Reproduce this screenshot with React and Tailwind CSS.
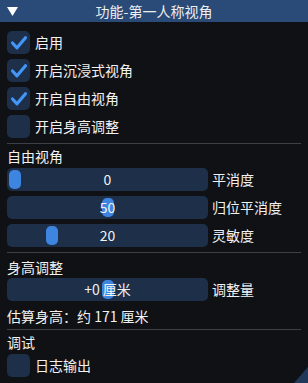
import React from "react";

const FONT = { fontFamily: '"Noto Sans CJK SC", "Noto Sans", sans-serif' };

function Checkbox({ checked, label, className = "" }) {
  return (
    <div className={"flex items-center h-[23px] " + className}>
      <div className="w-[23px] h-[23px] rounded-[5px] bg-[#1d2f49] flex items-center justify-center shrink-0">
        {checked && (
          <svg width="23" height="23" viewBox="0 0 23 23">
            <path d="M5.5 12 L10 16.8 L18.5 6.8" fill="none" stroke="#4296fa" strokeWidth="3.2" strokeLinecap="round" strokeLinejoin="round" />
          </svg>
        )}
      </div>
      <span className="ml-[5px] text-[14px] leading-[23px] text-[#f2f2f2]">{label}</span>
    </div>
  );
}

function Slider({ t, text, label, className = "" }) {
  const left = 2 + 185 * t;
  return (
    <div className={"flex items-center " + className}>
      <div className="relative w-[201px] h-[23px] rounded-[5px] bg-[#1d2f49] shrink-0">
        <div className="absolute top-[2px] h-[19px] w-[12px] rounded-[5px] bg-[#3d85e0]" style={{ left }} />
        <div className="absolute inset-0 flex items-center justify-center text-[14px] text-[#f2f2f2]">{text}</div>
      </div>
      <span className="ml-[4px] text-[14px] leading-[23px] text-[#f2f2f2]">{label}</span>
    </div>
  );
}

function Sep({ className = "" }) {
  return <div className={"h-px bg-[#3e3e47] " + className} />;
}

export default function App() {
  return (
    <div className="relative w-[308px] h-[383px] overflow-hidden bg-[#101115] text-[#f2f2f2]" style={FONT}>
      <div className="h-[22px] bg-[#2a4a78] grid grid-cols-[1fr_auto_1fr] items-center">
        <div className="pl-[7px] flex items-center">
          <svg width="11" height="10" viewBox="0 0 11 10">
            <path d="M0 1 L11 1 L5.5 10 Z" fill="#ffffff" />
          </svg>
        </div>
        <div className="text-[14px] leading-[22px] text-[#eeeeee]">功能-第一人称视角</div>
        <div />
      </div>
      <div className="px-[7px] pt-[9px] flex flex-col">
        <Checkbox checked label="启用" />
        <Checkbox checked label="开启沉浸式视角" className="mt-[5px]" />
        <Checkbox checked label="开启自由视角" className="mt-[5px]" />
        <Checkbox label="开启身高调整" className="mt-[5px]" />
        <Sep className="mt-[5px]" />
        <div className="mt-[4px] h-[16px] leading-[16px] text-[14px]">自由视角</div>
        <Slider t={0} text="0" label="平消度" className="mt-[4px]" />
        <Slider t={0.5} text="50" label="归位平消度" className="mt-[5px]" />
        <Slider t={0.2} text="20" label="灵敏度" className="mt-[5px]" />
        <Sep className="mt-[5px]" />
        <div className="mt-[6px] h-[16px] leading-[16px] text-[14px]">身高调整</div>
        <Slider t={0.5} text="+0 厘米" label="调整量" className="mt-[3px]" />
        <div className="mt-[7px] h-[16px] leading-[16px] text-[14px]">估算身高：约 171 厘米</div>
        <Sep className="mt-[5px]" />
        <div className="mt-[4px] h-[16px] leading-[16px] text-[14px]">调试</div>
        <Checkbox label="日志输出" className="mt-[4px]" />
      </div>
      <svg className="absolute right-0 bottom-0" width="14" height="16" viewBox="0 0 14 16">
        <path d="M14 0 L14 16 L0 16 Z" fill="#22385a" />
      </svg>
    </div>
  );
}
